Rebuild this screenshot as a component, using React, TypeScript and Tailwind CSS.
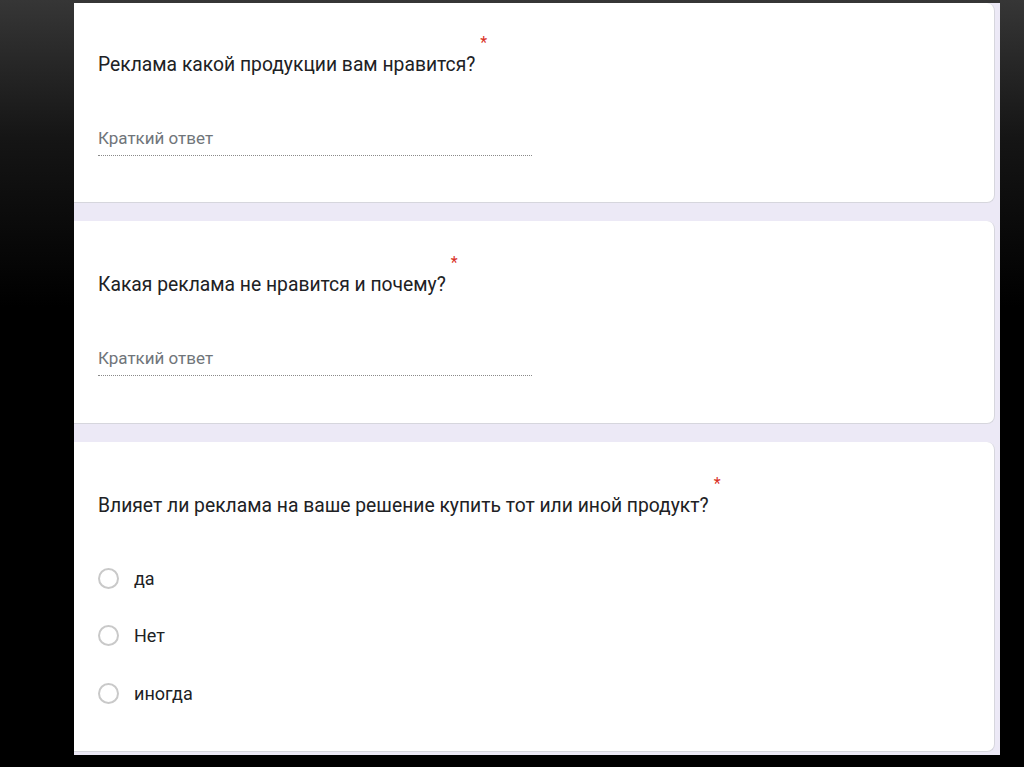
import React from "react";

const font = { fontFamily: "Roboto, 'Noto Sans', sans-serif" };

function Question({ text }: { text: string }) {
  return (
    <div className="flex items-start">
      <span className="text-[19.3px] leading-[24px] text-[#202124]">{text}</span>
      <span className="ml-[5px] -mt-[20px] text-[16px] leading-[20px] text-[#d93025]">*</span>
    </div>
  );
}

function ShortAnswer() {
  return (
    <div className="mt-[51px] w-[434px]">
      <div className="text-[17px] leading-[20px] text-[#70757a]">Краткий ответ</div>
      <div className="mt-[7px] border-b border-dotted border-[#8a8a8a]" />
    </div>
  );
}

function Radio({ label }: { label: string }) {
  return (
    <div className="flex h-[24px] items-center">
      <div className="h-[21px] w-[21px] rounded-full border-2 border-[#c9c9c9]" />
      <span className="ml-[15px] text-[18px] text-[#202124]">{label}</span>
    </div>
  );
}

export default function App() {
  return (
    <div
      className="flex h-[767px] w-[1024px] bg-[linear-gradient(180deg,#363636_0%,#151515_18%,#000_40%)] pl-[74px] pt-[3px]"
      style={font}
    >
      <div className="flex h-[752px] w-[926px] flex-col gap-[18px] bg-[#ece9f6] pr-[5px]">
        <div className="h-[200px] rounded-r-lg border-b border-r border-[#d6d6dd] bg-white pl-[24px] pt-[50px]">
          <Question text="Реклама какой продукции вам нравится?" />
          <ShortAnswer />
        </div>
        <div className="h-[203px] rounded-r-lg border-b border-r border-[#d6d6dd] bg-white pl-[24px] pt-[52px]">
          <Question text="Какая реклама не нравится и почему?" />
          <ShortAnswer />
        </div>
        <div className="h-[310px] rounded-r-lg border-b border-r border-[#d6d6dd] bg-white pl-[24px] pt-[52px]">
          <Question text="Влияет ли реклама на ваше решение купить тот или иной продукт?" />
          <div className="mt-[48px] flex flex-col gap-[33.5px]">
            <Radio label="да" />
            <Radio label="Нет" />
            <Radio label="иногда" />
          </div>
        </div>
      </div>
    </div>
  );
}
